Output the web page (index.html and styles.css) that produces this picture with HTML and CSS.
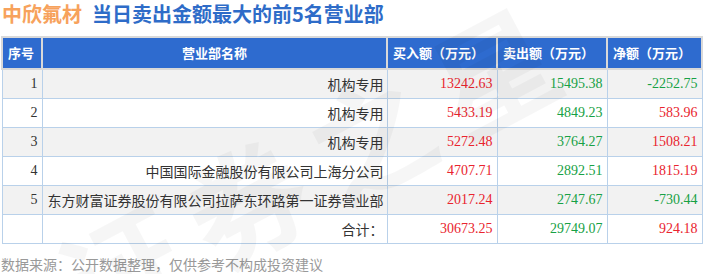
FILE: index.html
```html
<!DOCTYPE html>
<html lang="zh-CN">
<head>
    <meta charset="UTF-8">
    <title>中欣氟材 当日卖出金额最大的前5名营业部</title>
    <link rel="stylesheet" href="styles.css">
</head>
<body>
    <div class="page">
        <h1 class="title">
            <span class="stock">中欣氟材</span>
            <span class="caption">当日卖出金额最大的前5名营业部</span>
        </h1>

        <table class="rank-table">
            <colgroup>
                <col class="c-no">
                <col class="c-name">
                <col class="c-buy">
                <col class="c-sell">
                <col class="c-net">
            </colgroup>
            <thead>
                <tr>
                    <th>序号</th>
                    <th class="center">营业部名称</th>
                    <th>买入额（万元）</th>
                    <th>卖出额（万元）</th>
                    <th>净额（万元）</th>
                </tr>
            </thead>
            <tbody>
                <tr>
                    <td class="num">1</td>
                    <td class="name">机构专用</td>
                    <td class="num up">13242.63</td>
                    <td class="num down">15495.38</td>
                    <td class="num down">-2252.75</td>
                </tr>
                <tr>
                    <td class="num">2</td>
                    <td class="name">机构专用</td>
                    <td class="num up">5433.19</td>
                    <td class="num down">4849.23</td>
                    <td class="num up">583.96</td>
                </tr>
                <tr>
                    <td class="num">3</td>
                    <td class="name">机构专用</td>
                    <td class="num up">5272.48</td>
                    <td class="num down">3764.27</td>
                    <td class="num up">1508.21</td>
                </tr>
                <tr>
                    <td class="num">4</td>
                    <td class="name">中国国际金融股份有限公司上海分公司</td>
                    <td class="num up">4707.71</td>
                    <td class="num down">2892.51</td>
                    <td class="num up">1815.19</td>
                </tr>
                <tr>
                    <td class="num">5</td>
                    <td class="name">东方财富证券股份有限公司拉萨东环路第一证券营业部</td>
                    <td class="num up">2017.24</td>
                    <td class="num down">2747.67</td>
                    <td class="num down">-730.44</td>
                </tr>
                <tr>
                    <td></td>
                    <td class="name">合计：</td>
                    <td class="num up">30673.25</td>
                    <td class="num down">29749.07</td>
                    <td class="num up">924.18</td>
                </tr>
            </tbody>
        </table>

        <p class="source">数据来源：公开数据整理，仅供参考不构成投资建议</p>

        <div class="watermark">证券之星</div>
    </div>
</body>
</html>
```

FILE: styles.css
```css
* {
    margin: 0;
    padding: 0;
    box-sizing: border-box;
}

body {
    font-family: "Noto Sans CJK SC", "Noto Sans", sans-serif;
    background: #fff;
    color: #333;
    width: 703px;
    height: 274px;
    overflow: hidden;
}

.page {
    position: relative;
    height: 274px;
    overflow: hidden;
    padding: 0 2px 0 1px;
}

.title {
    display: flex;
    gap: 10px;
    height: 27px;
    align-items: center;
    font-size: 20px;
    font-weight: bold;
    line-height: 27px;
    padding-left: 1px;
}

.stock {
    color: #f7a25c;
}

.caption {
    color: #2e6cc8;
}

.rank-table {
    margin-top: 9px;
    width: 700px;
    border-collapse: collapse;
    table-layout: fixed;
}

.c-no { width: 40px; }
.c-name { width: 345px; }
.c-buy { width: 110px; }
.c-sell { width: 110px; }
.c-net { width: 95px; }

.rank-table th {
    height: 32px;
    background: #2e6bcf;
    color: #fff;
    font-size: 13px;
    font-weight: bold;
    line-height: 18px;
    text-align: left;
    padding: 0 5px;
    border: 2px solid #d9d9d9;
    white-space: nowrap;
}

.rank-table th.center {
    text-align: center;
}

.rank-table td {
    height: 29px;
    font-size: 14px;
    line-height: 18px;
    color: #333;
    border: 1px solid #b9d1ea;
    padding: 0 4px;
    text-align: right;
    white-space: nowrap;
}

.rank-table tbody tr:nth-child(odd) td {
    background: #f2f2f2;
}

.rank-table td.num {
    font-family: "Liberation Serif", "DejaVu Serif", serif;
}

.rank-table td.name {
    padding-right: 3px;
}

.up {
    color: #e9242e !important;
}

.down {
    color: #17a145 !important;
}

.source {
    margin-top: 11px;
    font-size: 14px;
    color: #999;
    line-height: 18px;
}

.watermark {
    position: absolute;
    left: 40px;
    top: 240px;
    font-size: 120px;
    line-height: 1;
    font-weight: bold;
    color: rgba(0, 0, 0, 0.035);
    transform: rotate(-28deg);
    transform-origin: left top;
    white-space: nowrap;
    pointer-events: none;
    letter-spacing: 20px;
}
```
